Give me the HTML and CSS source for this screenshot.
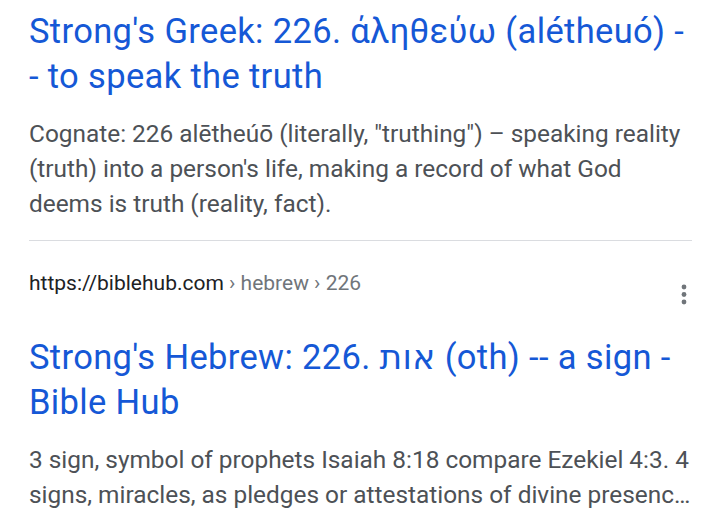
FILE: index.html
```html
<!DOCTYPE html>
<html lang="en">
<head>
<meta charset="utf-8">
<title>Results</title>
<link rel="stylesheet" href="styles.css">
</head>
<body>
<div class="results">
  <div class="result result-first">
    <a class="title" href="#">Strong's Greek: 226. άληθεύω (aléthеuó) -<wbr>- to speak the truth</a>
    <p class="snippet">Cognate: 226 alētheúō (literally, "truthing") – speaking reality (truth) into a person's life, making a record of what God deems is truth (reality, fact).</p>
  </div>
  <div class="result result-second">
    <div class="source">
      <div class="url"><span class="domain">https://biblehub.com</span><span class="crumbs"> › hebrew › 226</span></div>
      <button class="more" aria-label="More options">
        <svg width="16" height="22" viewBox="0 0 16 22"><circle cx="8" cy="3" r="2.4"/><circle cx="8" cy="10.5" r="2.4"/><circle cx="8" cy="18" r="2.4"/></svg>
      </button>
    </div>
    <a class="title title-second" href="#">Strong's Hebrew: 226. אות (oth) -- a sign - Bible Hub</a>
    <p class="snippet clamp">3 sign, symbol of prophets Isaiah 8:18 compare Ezekiel 4:3. 4 signs, miracles, as pledges or attestations of divine presence and of Jehovah's power.</p>
  </div>
</div>
</body>
</html>
```

FILE: styles.css
```css
html, body {
  margin: 0;
  padding: 0;
  background: #ffffff;
}

body {
  font-family: "Roboto", "Noto Sans", "DejaVu Sans", sans-serif;
  width: 720px;
  height: 520px;
  overflow: hidden;
}

.results {
  display: flex;
  flex-direction: column;
}

.result {
  padding: 0 24px 0 29px;
}

.result-first {
  padding-top: 9px;
}

.result-first .snippet {
  margin-right: 4px;
  padding-bottom: 19px;
  border-bottom: 1px solid #dadce0;
}

.result-second {
  padding-top: 30px;
  padding-bottom: 17px;
  border-bottom: 1px solid #ebebeb;
}

.title {
  display: block;
  margin-right: 4px;
  font-size: 34.5px;
  line-height: 45px;
  letter-spacing: 0.35px;
  color: #1558d6;
  text-decoration: none;
}

.snippet {
  margin: 17px 0 0;
  font-size: 24.4px;
  line-height: 35px;
  color: #4d5156;
}

.clamp {
  display: -webkit-box;
  -webkit-line-clamp: 2;
  -webkit-box-orient: vertical;
  overflow: hidden;
}

.source {
  display: flex;
  align-items: flex-start;
  justify-content: space-between;
}

.url {
  font-size: 21px;
  line-height: 24px;
}

.domain {
  color: #202124;
}

.crumbs {
  color: #70757a;
}

.more {
  border: 0;
  background: none;
  padding: 0;
  margin: 13px 4px 0 0;
  width: 16px;
  height: 22px;
  display: flex;
}

.more svg {
  fill: #70757a;
}

.title-second {
  margin-top: 29px;
}
```
